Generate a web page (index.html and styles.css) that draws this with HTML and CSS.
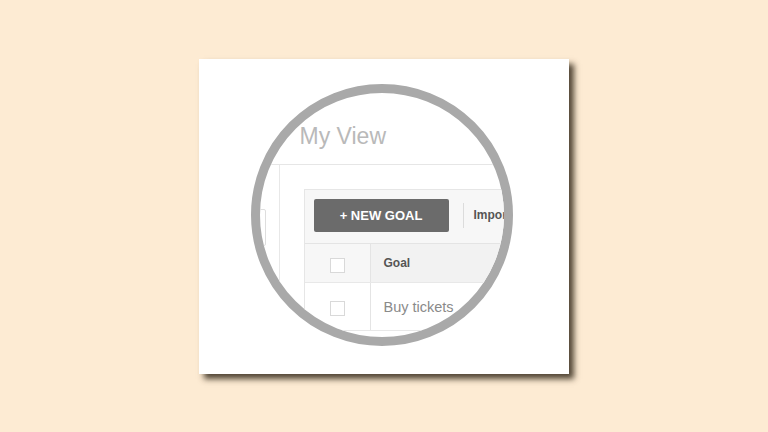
FILE: index.html
```html
<!DOCTYPE html>
<html lang="en">
<head>
    <meta charset="UTF-8">
    <meta name="viewport" content="width=device-width, initial-scale=1.0">
    <title>My View</title>
    <link rel="stylesheet" href="styles.css">
</head>
<body>
    <div class="card">
        <div class="lens">
            <div class="view">
                <h1 class="view-title">My View</h1>
                <div class="view-body">
                    <div class="sidebar">
                        <div class="search-box"></div>
                    </div>
                    <div class="panel">
                        <div class="toolbar">
                            <button class="new-goal">+ NEW GOAL</button>
                            <span class="divider"></span>
                            <span class="import">Import</span>
                        </div>
                        <div class="row row-head">
                            <div class="cell-check"><span class="checkbox"></span></div>
                            <div class="cell-goal">Goal</div>
                        </div>
                        <div class="row">
                            <div class="cell-check"><span class="checkbox"></span></div>
                            <div class="cell-goal goal-name">Buy tickets</div>
                        </div>
                    </div>
                </div>
            </div>
        </div>
    </div>
</body>
</html>
```

FILE: styles.css
```css
body {
    margin: 0;
    height: 100vh;
    background-color: #fdebd3;
    font-family: 'Liberation Sans', Arial, sans-serif;
    display: flex;
    justify-content: center;
    align-items: center;
}

.card {
    width: 370px;
    height: 315px;
    margin: 0 0 0 -1px;
    box-sizing: border-box;
    padding: 25px 0 0 52px;
    background-color: #fff;
    box-shadow: 5px 5px 6px rgba(50, 40, 25, 0.85);
}

.lens {
    width: 262px;
    height: 262px;
    box-sizing: border-box;
    border: 9px solid #a9a9a9;
    border-radius: 50%;
    overflow: hidden;
    background-color: #fff;
}

.view {
    width: 420px;
}

.view-title {
    margin: 29px 0 0 0;
    padding: 0 0 14px 40px;
    font-size: 23px;
    line-height: 28px;
    font-weight: normal;
    color: #b9b9b9;
    border-bottom: 1px solid #e6e6e6;
}

.view-body {
    display: flex;
}

.sidebar {
    width: 19px;
    height: 200px;
    border-right: 1px solid #e8e8e8;
}

.search-box {
    width: 36px;
    height: 37px;
    box-sizing: border-box;
    margin: 44px 0 0 -30px;
    border: 1px solid #dedede;
    border-radius: 2px;
}

.panel {
    flex-grow: 1;
    margin: 24px 0 0 24px;
    border-top: 1px solid #e6e6e6;
    border-left: 1px solid #e6e6e6;
}

.toolbar {
    display: flex;
    align-items: center;
    padding: 9px 9px 11px;
    background-color: #f7f7f7;
    border-bottom: 1px solid #e4e4e4;
}

.new-goal {
    width: 135px;
    height: 33px;
    border: none;
    border-radius: 2px;
    background-color: #6b6b6b;
    color: #fff;
    font-family: inherit;
    font-size: 13px;
    font-weight: bold;
}

.divider {
    width: 1px;
    height: 25px;
    margin: 0 10px 0 14px;
    background-color: #dcdcdc;
}

.import {
    font-size: 12px;
    font-weight: bold;
    color: #555;
}

.row {
    display: flex;
    height: 47px;
    border-bottom: 1px solid #e8e8e8;
}

.row-head {
    height: 38px;
    background-color: #f2f2f2;
}

.cell-check {
    width: 66px;
    display: flex;
    justify-content: center;
    align-items: center;
    border-right: 1px solid #e4e4e4;
}

.row-head .cell-check {
    background-color: #f7f7f7;
}

.row .cell-check {
    align-items: flex-start;
    padding-top: 18px;
    box-sizing: border-box;
}

.row-head .cell-check {
    padding-top: 14px;
}

.checkbox {
    width: 15px;
    height: 15px;
    box-sizing: border-box;
    background-color: #fff;
    border: 1px solid #d9d9d9;
}

.cell-goal {
    display: flex;
    align-items: center;
    padding-left: 13px;
    font-size: 12px;
    font-weight: bold;
    color: #555;
}

.goal-name {
    align-items: flex-start;
    padding-top: 16px;
    font-size: 14.5px;
    font-weight: normal;
    color: #8a8a8a;
}
```
